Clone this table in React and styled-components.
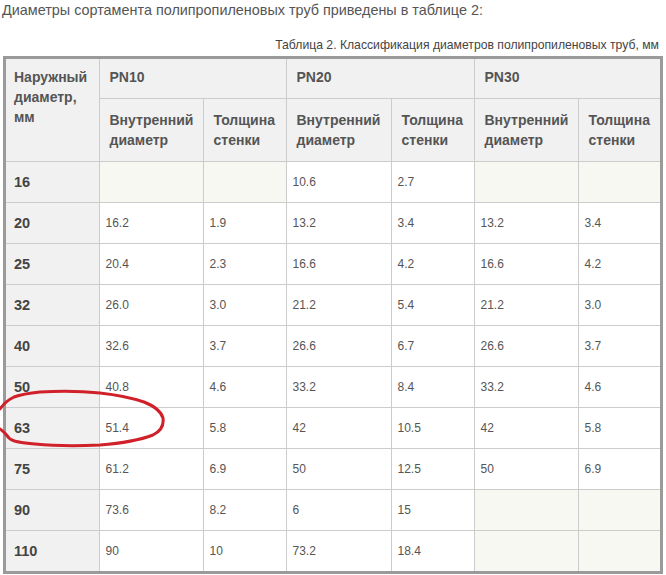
import React from 'react';
import styled, { createGlobalStyle } from 'styled-components';

const GlobalStyle = createGlobalStyle`
  body {
    margin: 0;
    background: #fff;
    font-family: "Liberation Sans", Arial, sans-serif;
  }
`;

const Page = styled.div`
  position: relative;
  width: 666px;
  height: 575px;
  overflow: hidden;
`;

const Intro = styled.p`
  margin: 0;
  padding: 0 0 0 2px;
  font-size: 14.4px;
  line-height: 20px;
  color: #555;
`;

const Caption = styled.div`
  margin: 17px 7px 0 0;
  text-align: right;
  font-size: 12.2px;
  line-height: 16px;
  color: #444;
`;

const Frame = styled.div`
  margin: 3px 0 0 3px;
  width: 654px;
  border: 3px solid #9a9a9a;
`;

const Table = styled.table`
  width: 654px;
  table-layout: fixed;
  border-collapse: collapse;
  border-style: hidden;
`;

const HeadCell = styled.th`
  background: #f1f1f1;
  border: 1px solid #cccccc;
  text-align: left;
  font-weight: bold;
  font-size: 14px;
  line-height: 20px;
  color: #555;
  padding: ${p => (p.$top ? '8px 10px 0' : '0 10px')};
  padding-left: ${p => (p.$first ? 8 : 10)}px;
  vertical-align: ${p => (p.$top ? 'top' : 'middle')};
  height: ${p => p.$h}px;
`;

const LabelCell = styled.td`
  background: #f1f1f1;
  border: 1px solid #cccccc;
  font-weight: bold;
  font-size: 14.5px;
  color: #444;
  padding: 0 8px;
  height: 40px;
  vertical-align: middle;
`;

const Cell = styled.td`
  background: ${p => (p.$empty ? '#f8f8f2' : '#fff')};
  border: 1px solid #cccccc;
  font-size: 12px;
  color: #555;
  padding: 0 6px;
  height: 40px;
  vertical-align: middle;
`;

const Mark = styled.svg`
  position: absolute;
  left: 0;
  top: 0;
  pointer-events: none;
`;

const rows = [
  ['16', null, null, '10.6', '2.7', null, null],
  ['20', '16.2', '1.9', '13.2', '3.4', '13.2', '3.4'],
  ['25', '20.4', '2.3', '16.6', '4.2', '16.6', '4.2'],
  ['32', '26.0', '3.0', '21.2', '5.4', '21.2', '3.0'],
  ['40', '32.6', '3.7', '26.6', '6.7', '26.6', '3.7'],
  ['50', '40.8', '4.6', '33.2', '8.4', '33.2', '4.6'],
  ['63', '51.4', '5.8', '42', '10.5', '42', '5.8'],
  ['75', '61.2', '6.9', '50', '12.5', '50', '6.9'],
  ['90', '73.6', '8.2', '6', '15', null, null],
  ['110', '90', '10', '73.2', '18.4', null, null],
];

const widths = [93, 104, 83, 105, 83, 104, 82];

export default function App() {
  return (
    <Page>
      <GlobalStyle />
      <Intro>Диаметры сортамента полипропиленовых труб приведены в таблице 2:</Intro>
      <Caption>Таблица 2. Классификация диаметров полипропиленовых труб, мм</Caption>
      <Frame>
        <Table>
          <colgroup>
            {widths.map((w, i) => <col key={i} style={{ width: w }} />)}
          </colgroup>
          <thead>
            <tr>
              <HeadCell rowSpan={2} $top $first>Наружный диаметр, мм</HeadCell>
              <HeadCell colSpan={2} $top $h={31}>PN10</HeadCell>
              <HeadCell colSpan={2} $top $h={31}>PN20</HeadCell>
              <HeadCell colSpan={2} $top $h={31}>PN30</HeadCell>
            </tr>
            <tr>
              {[0, 1, 2].map(i => (
                <React.Fragment key={i}>
                  <HeadCell $h={62}>Внутренний диаметр</HeadCell>
                  <HeadCell $h={62}>Толщина стенки</HeadCell>
                </React.Fragment>
              ))}
            </tr>
          </thead>
          <tbody>
            {rows.map(r => (
              <tr key={r[0]}>
                <LabelCell>{r[0]}</LabelCell>
                {r.slice(1).map((v, i) => (
                  <Cell key={i} $empty={v === null}>{v}</Cell>
                ))}
              </tr>
            ))}
          </tbody>
        </Table>
      </Frame>
      <Mark width="666" height="575" viewBox="0 0 666 575">
        <path
          d="M0 409 C4 403 8 400 14 397 C22 394 30 393 40 392 C60 391 80 391 100 393 C118 395 132 398 144 402 C154 406 161 411 163 418 C164 425 161 431 153 435 C140 440 125 443 100 445 C80 446 55 446 35 444 C22 443 13 442 9 438 C6 434 3 431 0 429"
          fill="none"
          stroke="#d0202a"
          strokeWidth="3"
          strokeLinecap="round"
        />
      </Mark>
    </Page>
  );
}
